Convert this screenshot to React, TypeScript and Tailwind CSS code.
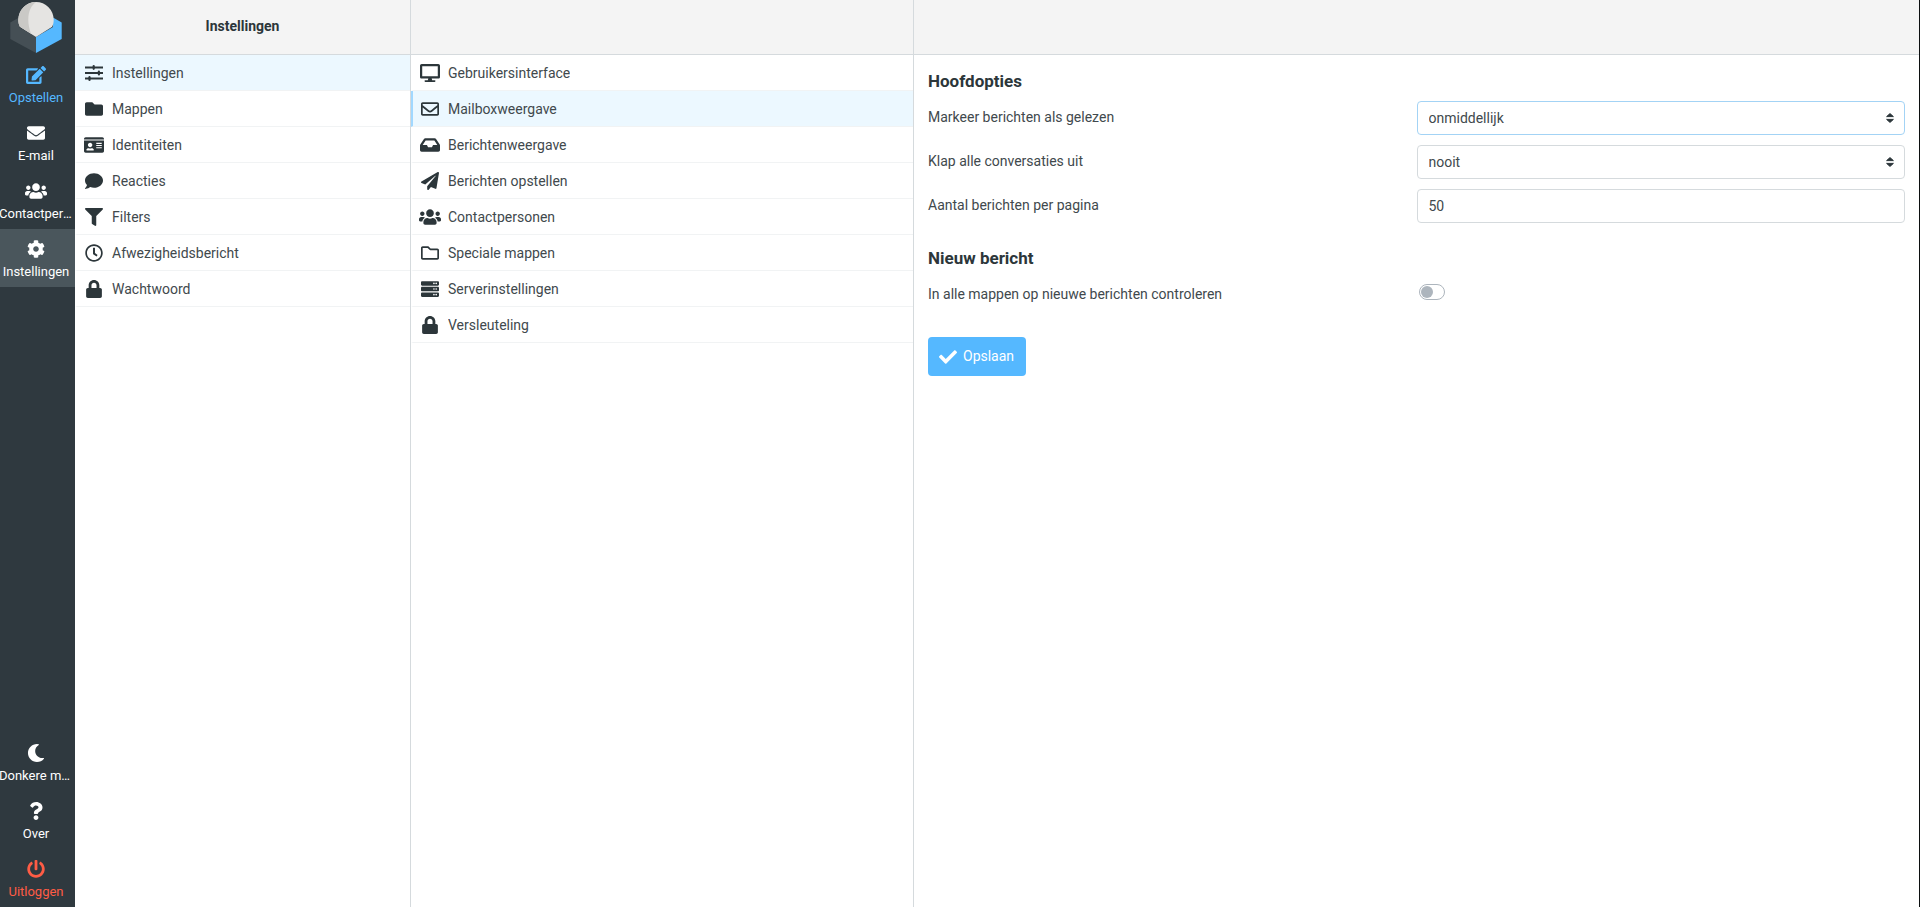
import type { ReactNode } from "react";
import type { IconType } from "react-icons";
import {
  FaEdit, FaEnvelope, FaUsers, FaCog, FaMoon, FaQuestion, FaPowerOff, FaFolder, FaIdCard,
  FaComment, FaFilter, FaRegClock, FaLock, FaDesktop, FaRegEnvelope, FaInbox, FaPaperPlane,
  FaRegFolder, FaServer, FaCheck,
} from "react-icons/fa";

type IconComponent = IconType | ((props: { className?: string }) => ReactNode);

function SlidersIcon({ className }: { className?: string }) {
  return (
    <svg viewBox="0 0 18 18" fill="currentColor" className={className} aria-hidden="true">
      <path d="M0 2.4h18v2H0zM0 8h18v2H0zM0 13.6h18v2H0z" />
      <rect x="7.600" y="0.900" width="2.200" height="5" rx="1.100" />
      <rect x="12.800" y="6.500" width="2.200" height="5" rx="1.100" />
      <rect x="3.400" y="12.100" width="2.200" height="5" rx="1.100" />
    </svg>
  );
}

function Logo() {
  return (
    <svg viewBox="0 0 54 54" className="h-[54px] w-[54px]" role="img" aria-label="Roundcube">
      <path d="M27 53 1.300 39V22.500L10 17.500V27l17 10z" fill="#454f55" />
      <path d="M27 53 52.700 39V22.500L44 17.500V27L27 37z" fill="#55b8ff" />
      <path d="M27 2a17.700 17.700 0 0 1 17.700 17.700c0 2.600-.5 4.800-1.500 7L27 37 10.800 26.700c-1-2.200-1.500-4.400-1.500-7A17.700 17.700 0 0 1 27 2z" fill="#e5e4e2" />
      <path d="M27 2C22 5.500 19.300 12 19.300 19.500c0 5 1 9.300 2.700 14.300L10.800 26.700c-1-2.200-1.500-4.400-1.500-7A17.700 17.700 0 0 1 27 2z" fill="#cac9c6" />
    </svg>
  );
}

interface TaskProps { icon: IconComponent; label: string; tone?: string; active?: boolean; iconSize?: string }

function Task({ icon: Icon, label, tone = "text-white", active, iconSize = "size-[18px]" }: TaskProps) {
  return (
    <a href="#" className={`flex h-[58px] flex-col items-center pt-[10px] pr-[3px] ${tone} ${active ? "bg-[#4a565c]" : ""}`}>
      <span className="flex h-[19px] items-center"><Icon className={iconSize} /></span>
      <span className="mt-1 block w-[74px] truncate text-center text-[13px] leading-5">{label}</span>
    </a>
  );
}

interface RowProps { icon: IconComponent; label: string; size?: string; state?: "section" | "selected" }

function Row({ icon: Icon, label, size = "size-[18px]", state }: RowProps) {
  const look =
    state === "selected" ? "border-l-[#a1d8ff] bg-[#ecf8ff]" : state === "section" ? "border-l-transparent bg-[#ecf8ff]" : "border-l-transparent";
  return (
    <li>
      <a href="#" className={`flex h-9 items-center border-b border-l-2 border-b-[#f1f3f4] pt-px pl-[7px] ${look}`}>
        <span className="flex w-5 shrink-0 justify-center text-[#2c363a]"><Icon className={`shrink-0 ${size}`} /></span>
        <span className="ml-2 truncate">{label}</span>
      </a>
    </li>
  );
}

const sections: RowProps[] = [
  { icon: SlidersIcon, label: "Instellingen", state: "section" },
  { icon: FaFolder, label: "Mappen" },
  { icon: FaIdCard, label: "Identiteiten", size: "size-5" },
  { icon: FaComment, label: "Reacties" },
  { icon: FaFilter, label: "Filters" },
  { icon: FaRegClock, label: "Afwezigheidsbericht" },
  { icon: FaLock, label: "Wachtwoord" },
];

const preferences: RowProps[] = [
  { icon: FaDesktop, label: "Gebruikersinterface", size: "size-5" },
  { icon: FaRegEnvelope, label: "Mailboxweergave", state: "selected" },
  { icon: FaInbox, label: "Berichtenweergave", size: "size-5" },
  { icon: FaPaperPlane, label: "Berichten opstellen" },
  { icon: FaUsers, label: "Contactpersonen", size: "size-[22px]" },
  { icon: FaRegFolder, label: "Speciale mappen" },
  { icon: FaServer, label: "Serverinstellingen" },
  { icon: FaLock, label: "Versleuteling" },
];

const control = "h-[34px] w-full appearance-none rounded-[4px] border bg-white px-[11px] text-[#41494d] outline-none";

function Field({ id, label, children }: { id: string; label: string; children: ReactNode }) {
  return (
    <div className="mb-[10px] grid grid-cols-2 items-start">
      <label htmlFor={id} className="pt-[5px] leading-[22px]">{label}</label>
      {children}
    </div>
  );
}

function SelectBox({ id, options, focused }: { id: string; options: string[]; focused?: boolean }) {
  return (
    <span className="relative block">
      <select id={id} defaultValue={options[0]} className={`${control} ${focused ? "border-[#a3d3f5]" : "border-[#d5dadd]"}`}>
        {options.map((o) => <option key={o}>{o}</option>)}
      </select>
      <svg viewBox="0 0 8 10" className="pointer-events-none absolute top-3 right-[11px] h-[10px] w-2" fill="#2c363a" stroke="#2c363a" strokeLinejoin="round" aria-hidden="true">
        <path d="M4 .600 7.400 3.600H.6zM4 9.400.6 6.400h6.800z" />
      </svg>
    </span>
  );
}

export default function App() {
  return (
    <div className="flex min-h-screen border-r border-[#0c0f10] bg-white font-[Roboto,sans-serif] text-[14px] text-[#41494d]">
      <nav aria-label="Taken" className="flex w-[75px] shrink-0 flex-col overflow-hidden bg-[#2f393f]">
        <div className="flex h-[55px] justify-center pr-[3px]"><Logo /></div>
        <Task icon={FaEdit} label="Opstellen" tone="text-[#55b8ff]" iconSize="size-5" />
        <Task icon={FaEnvelope} label="E-mail" />
        <Task icon={FaUsers} label="Contactpersonen" iconSize="size-[22px]" />
        <Task icon={FaCog} label="Instellingen" active />
        <div className="mt-auto">
          <Task icon={FaMoon} label="Donkere modus" />
          <Task icon={FaQuestion} label="Over" />
          <Task icon={FaPowerOff} label="Uitloggen" tone="text-[#ff5c45]" />
        </div>
      </nav>
      <div className="grid flex-1 grid-cols-[336px_503px_1fr]">
        <section className="border-r border-[#d5dadd]">
          <header className="flex h-[55px] items-center justify-center border-b border-[#d5dadd] bg-[#f4f4f4] pb-[2px] font-bold text-[#2c363a]">
            <h1>Instellingen</h1>
          </header>
          <ul>{sections.map((r) => <Row key={r.label} {...r} />)}</ul>
        </section>
        <section className="border-r border-[#d5dadd]">
          <header className="h-[55px] border-b border-[#d5dadd] bg-[#f4f4f4]" />
          <ul>{preferences.map((r) => <Row key={r.label} {...r} />)}</ul>
        </section>
        <main>
          <header className="h-[55px] border-b border-[#d5dadd] bg-[#f4f4f4]" />
          <form className="px-[14px] pt-[14px]">
            <fieldset>
              <legend className="mb-2 text-[17px] leading-6 font-bold text-[#2c363a]">Hoofdopties</legend>
              <Field id="mark" label="Markeer berichten als gelezen"><SelectBox id="mark" options={["onmiddellijk", "nooit"]} focused /></Field>
              <Field id="expand" label="Klap alle conversaties uit"><SelectBox id="expand" options={["nooit", "altijd"]} /></Field>
              <Field id="pagesize" label="Aantal berichten per pagina">
                <input id="pagesize" type="text" defaultValue="50" className={`${control} border-[#d5dadd]`} />
              </Field>
            </fieldset>
            <fieldset className="mt-[13px]">
              <legend className="mb-2 text-[17px] leading-6 font-bold text-[#2c363a]">Nieuw bericht</legend>
              <Field id="checkall" label="In alle mappen op nieuwe berichten controleren">
                <input
                  id="checkall"
                  type="checkbox"
                  className="mt-[6px] ml-[2px] h-4 w-[26px] appearance-none rounded-full border border-[#adb5bd] bg-white before:m-px before:block before:size-3 before:rounded-full before:bg-[#adb5bd] checked:before:ml-[11px]"
                />
              </Field>
            </fieldset>
            <button type="button" className="mt-[22px] flex h-[39px] items-center rounded-[4px] bg-[#55b8ff] pr-3 pl-[11px] text-white">
              <FaCheck className="size-[18px]" />
              <span className="ml-[6px]">Opslaan</span>
            </button>
          </form>
        </main>
      </div>
    </div>
  );
}
